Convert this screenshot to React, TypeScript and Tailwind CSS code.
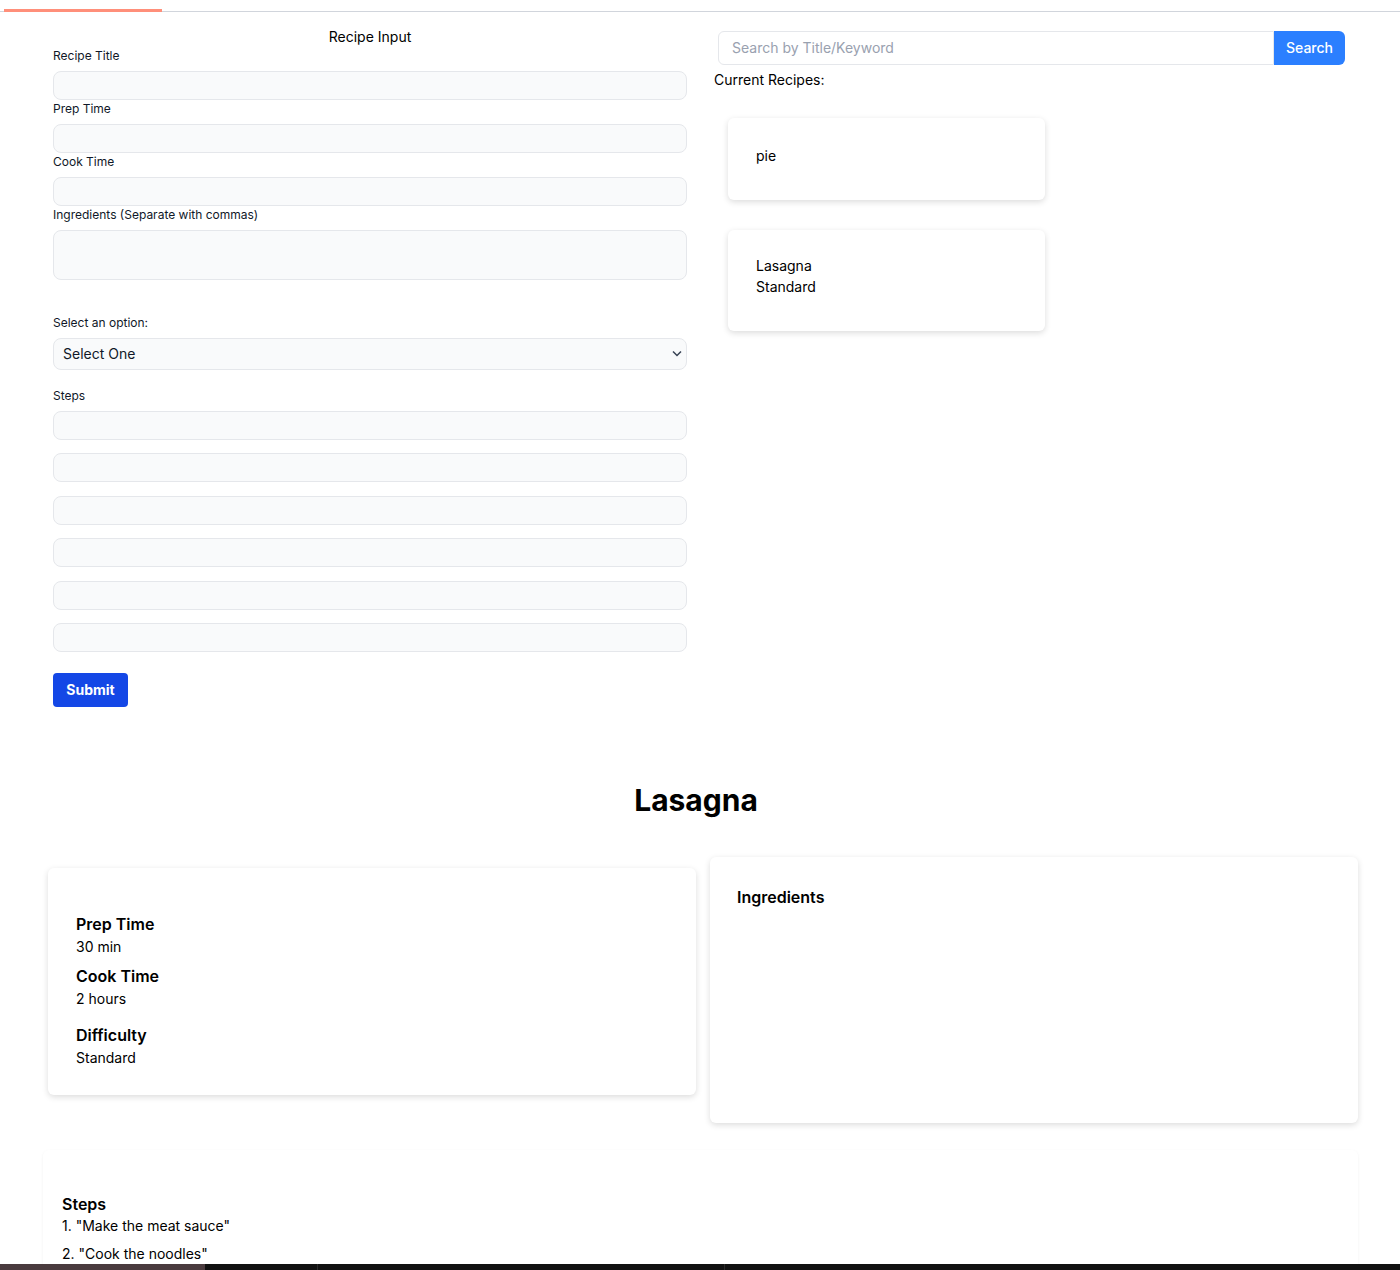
import { useState } from "react";

const recipes = [
  { title: "pie", difficulty: "" },
  { title: "Lasagna", difficulty: "Standard" },
];

const steps = ['"Make the meat sauce"', '"Cook the noodles"'];

const Label = ({ children }: { children: React.ReactNode }) => (
  <label className="block text-xs leading-[18px] text-gray-900 mb-[6px]">{children}</label>
);

const inputClass =
  "block w-full h-[29px] rounded-lg border border-gray-200 bg-gray-50 px-2 text-sm outline-none";

const App = () => {
  const [search, setSearch] = useState("");
  const [difficulty, setDifficulty] = useState("");

  return (
    <div className="min-h-screen bg-white font-['Inter',sans-serif] text-black">
      {/* loading bar */}
      <div className="relative h-[3px] mt-[9px]">
        <div className="absolute left-0 right-0 top-[2px] h-px bg-gray-300" />
        <div className="absolute left-[4px] top-0 h-[3px] w-[158px] bg-[#ff8f7a]" />
      </div>

      <div className="flex">
        {/* form */}
        <div className="ml-[53px] w-[634px] mt-[15px]">
          <h2 className="text-sm leading-5 text-center">Recipe Input</h2>
          <Label>Recipe Title</Label>
          <input className={inputClass} />
          <Label>Prep Time</Label>
          <input className={inputClass} />
          <Label>Cook Time</Label>
          <input className={inputClass} />
          <Label>Ingredients (Separate with commas)</Label>
          <textarea className="block w-full h-[50px] rounded-lg border border-gray-200 bg-gray-50 px-2 text-sm outline-none resize-none" />

          <div className="mt-[34px]">
            <Label>Select an option:</Label>
          </div>
          <div className="relative">
            <select
              value={difficulty}
              onChange={(e) => setDifficulty(e.target.value)}
              className="block w-full h-[32px] appearance-none rounded-lg border border-gray-200 bg-gray-50 px-[9px] text-sm text-gray-900 outline-none"
            >
              <option value="">Select One</option>
              <option value="Easy">Easy</option>
              <option value="Standard">Standard</option>
              <option value="Hard">Hard</option>
            </select>
            <svg
              className="pointer-events-none absolute right-[5px] top-[12px] w-[10px] h-[7px] text-gray-700"
              viewBox="0 0 10 7"
              fill="none"
              stroke="currentColor"
              strokeWidth="1.5"
            >
              <path d="M1 1.5l4 4 4-4" />
            </svg>
          </div>

          <div className="mt-[17px]">
            <Label>Steps</Label>
          </div>
          <div className="flex flex-col gap-[13.4px]">
            {[0, 1, 2, 3, 4, 5].map((i) => (
              <input key={i} className={inputClass} />
            ))}
          </div>

          <button className="mt-[21px] h-[34px] w-[75px] rounded-sm bg-blue-700 text-sm font-bold text-white">
            Submit
          </button>
        </div>

        {/* search + list */}
        <div className="ml-[27px] w-[631px] mt-[19px]">
          <div className="flex ml-[4px] h-[34px]">
            <input
              value={search}
              onChange={(e) => setSearch(e.target.value)}
              placeholder="Search by Title/Keyword"
              className="flex-1 rounded-l-md border border-gray-200 px-[13px] text-sm text-gray-900 placeholder:text-gray-400 outline-none"
            />
            <button className="w-[71px] rounded-r-md bg-blue-500 text-sm font-medium text-white">
              Search
            </button>
          </div>
          <p className="mt-[5px] text-sm leading-5">Current Recipes:</p>
          <div className="ml-[14px] mt-[28px] flex flex-col gap-[30px]">
            {recipes.map((r, i) => (
              <div
                key={r.title}
                className={`w-[317px] rounded-md bg-white px-7 pb-[34px] shadow-[0_2px_6px_rgba(0,0,0,0.14)] ${
                  i === 0 ? "pt-[27px]" : "pt-[25px]"
                }`}
              >
                <p className="text-sm leading-[21px]">{r.title}</p>
                {r.difficulty && <p className="text-sm leading-[21px]">{r.difficulty}</p>}
              </div>
            ))}
          </div>
        </div>
      </div>

      {/* detail */}
      <h1 className="mt-[75px] pr-[8px] text-center text-3xl font-bold leading-9">Lasagna</h1>

      <div className="ml-[48px] mt-[39px] flex items-start gap-[14px]">
        <div className="w-[648px] h-[227px] mt-[11px] rounded-md bg-white px-7 pt-[44px] shadow-[0_2px_6px_rgba(0,0,0,0.14)]">
          <h3 className="text-base font-semibold leading-6">Prep Time</h3>
          <p className="text-sm leading-[22px]">30 min</p>
          <h3 className="mt-[6px] text-base font-semibold leading-6">Cook Time</h3>
          <p className="text-sm leading-[22px]">2 hours</p>
          <h3 className="mt-[13px] text-base font-semibold leading-6">Difficulty</h3>
          <p className="text-sm leading-[22px]">Standard</p>
        </div>
        <div className="w-[648px] h-[266px] rounded-md bg-white px-[27px] pt-[28px] shadow-[0_2px_6px_rgba(0,0,0,0.14)]">
          <h3 className="text-base font-semibold leading-6">Ingredients</h3>
        </div>
      </div>

      <div className="ml-[43px] mt-[27px] w-[1315px] h-[220px] rounded-md bg-white px-[19px] pt-[42px] shadow-[0_1px_3px_rgba(0,0,0,0.06)]">
        <h3 className="text-base font-semibold leading-6">Steps</h3>
        {steps.map((s, i) => (
          <p key={s} className={`text-sm leading-5 ${i > 0 ? "mt-[8px]" : ""}`}>
            {i + 1}. {s}
          </p>
        ))}
      </div>

      {/* dock strip */}
      <div className="fixed bottom-0 left-0 right-0 h-[6px] flex bg-[#111111]">
        <div className="w-[205px] bg-[#4a3b3e]" />
        <div className="w-[113px] border-r border-[#2a2a2a]" />
        <div className="w-[407px] border-r border-[#2a2a2a]" />
      </div>
    </div>
  );
};

export default App;
